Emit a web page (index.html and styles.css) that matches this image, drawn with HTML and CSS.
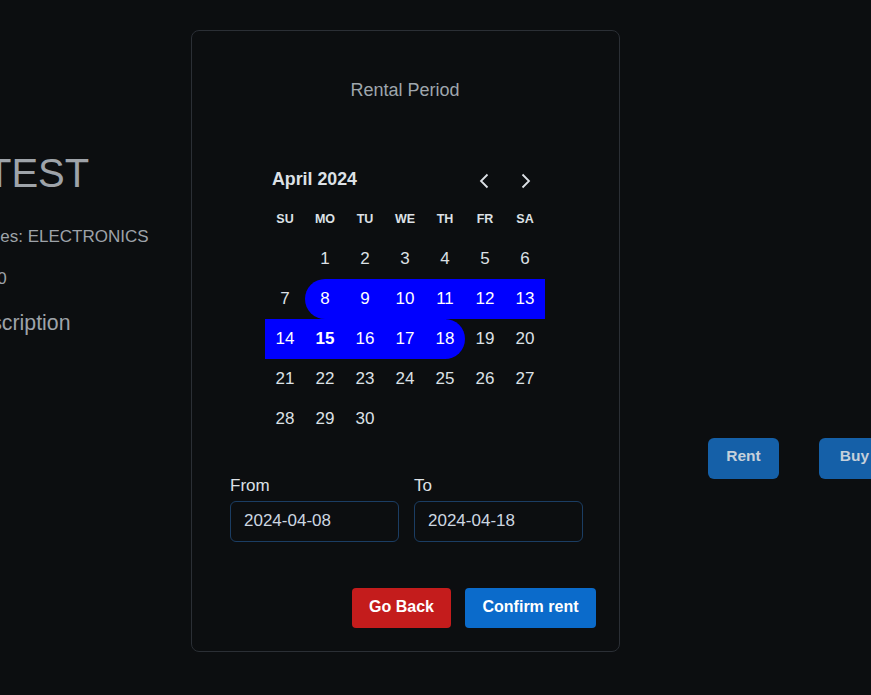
FILE: index.html
```html
<!DOCTYPE html>
<html>
<head>
<meta charset="utf-8">
<link rel="stylesheet" href="styles.css">
</head>
<body>
<div class="page">
  <div class="info">
    <h1 class="title">TEST</h1>
    <p class="cat">Categories: ELECTRONICS</p>
    <p class="price">Price: 0</p>
    <p class="desc">Description</p>
  </div>
  <div class="actions">
    <button class="bg-btn">Rent</button>
    <button class="bg-btn">Buy</button>
  </div>
</div>

<div class="modal">
  <div class="modal-title">Rental Period</div>
  <div class="calendar">
    <div class="cal-head">
      <span class="month">April 2024</span>
      <div class="arrows">
        <span class="arrow"><svg width="14" height="16" viewBox="0 0 14 16"><path d="M10.5 1.5 L4 8 L10.5 14.5" fill="none" stroke="#dde1e6" stroke-width="1.8"/></svg></span>
        <span class="arrow"><svg width="14" height="16" viewBox="0 0 14 16"><path d="M3.5 1.5 L10 8 L3.5 14.5" fill="none" stroke="#dde1e6" stroke-width="1.8"/></svg></span>
      </div>
    </div>
    <div class="grid">
      <div class="wd">SU</div><div class="wd">MO</div><div class="wd">TU</div><div class="wd">WE</div><div class="wd">TH</div><div class="wd">FR</div><div class="wd">SA</div>
      <div class="d"></div><div class="d">1</div><div class="d">2</div><div class="d">3</div><div class="d">4</div><div class="d">5</div><div class="d">6</div>
      <div class="d">7</div><div class="d sel start">8</div><div class="d sel">9</div><div class="d sel">10</div><div class="d sel">11</div><div class="d sel">12</div><div class="d sel">13</div>
      <div class="d sel">14</div><div class="d sel today">15</div><div class="d sel">16</div><div class="d sel">17</div><div class="d sel end">18</div><div class="d">19</div><div class="d">20</div>
      <div class="d">21</div><div class="d">22</div><div class="d">23</div><div class="d">24</div><div class="d">25</div><div class="d">26</div><div class="d">27</div>
      <div class="d">28</div><div class="d">29</div><div class="d">30</div><div class="d"></div><div class="d"></div><div class="d"></div><div class="d"></div>
    </div>
  </div>
  <div class="fields">
    <div class="field">
      <label class="lbl">From</label>
      <div class="input">2024-04-08</div>
    </div>
    <div class="field">
      <label class="lbl">To</label>
      <div class="input">2024-04-18</div>
    </div>
  </div>
  <div class="buttons">
    <button class="btn back">Go Back</button>
    <button class="btn confirm">Confirm rent</button>
  </div>
</div>
</body>
</html>
```
FILE: styles.css
```css
* { box-sizing: border-box; }
html, body {
  margin: 0;
  padding: 0;
  background: #0c0e10;
  overflow: hidden;
  font-family: "Liberation Sans", Arial, sans-serif;
}
.page {
  width: 871px;
  height: 695px;
  display: flex;
  overflow: hidden;
}
.info {
  margin-left: -64px;
  padding-top: 148px;
  width: 500px;
  flex: none;
  color: #9ea3a9;
}
.title {
  margin: 0 0 0 51px;
  font-weight: 400;
  font-size: 40px;
  line-height: 50px;
}
.cat {
  margin: 29px 0 0 0;
  font-size: 17px;
  line-height: 20px;
}
.price {
  margin: 22px 0 0 13px;
  font-size: 17px;
  line-height: 20px;
}
.desc {
  margin: 21px 0 0 28px;
  font-size: 21.3px;
  line-height: 26px;
}
.actions {
  margin-left: 272px;
  padding-top: 438px;
  display: flex;
  gap: 40px;
  flex: none;
}
.bg-btn {
  height: 41px;
  width: 71px;
  border: none;
  border-radius: 6px;
  background: #1560a8;
  color: #c5d0db;
  font-family: "Liberation Sans", Arial, sans-serif;
  font-weight: 700;
  font-size: 15.5px;
  padding: 0 0 5px;
}

.modal {
  position: fixed;
  left: 191px;
  top: 30px;
  width: 429px;
  height: 622px;
  border: 1px solid #2b2f35;
  border-radius: 8px;
  background: #0c0e10;
  padding: 49px 23px 0 38px;
  display: flex;
  flex-direction: column;
}
.modal-title {
  text-align: center;
  font-size: 18px;
  line-height: 20px;
  color: #9fa6ad;
  margin-left: -16px;
}
.calendar {
  margin: 60px 0 0 35px;
  width: 280px;
}
.cal-head {
  height: 39px;
  display: flex;
  align-items: center;
  justify-content: space-between;
  padding-left: 7px;
}
.month {
  font-weight: 700;
  font-size: 17.8px;
  color: #dde1e6;
}
.arrows {
  display: flex;
  gap: 28px;
  margin-right: 12px;
  padding-top: 2px;
}
.arrow {
  width: 14px;
  height: 16px;
  display: flex;
}
.grid {
  display: grid;
  grid-template-columns: repeat(7, 40px);
  grid-auto-rows: 40px;
}
.wd {
  display: flex;
  align-items: center;
  justify-content: center;
  font-size: 12.5px;
  font-weight: 700;
  color: #dde1e6;
}
.d {
  display: flex;
  align-items: center;
  justify-content: center;
  font-size: 17px;
  color: #dde1e6;
}
.sel {
  background: #0000ff;
  color: #ffffff;
}
.start { border-radius: 20px 0 0 20px; }
.end { border-radius: 0 20px 20px 0; }
.today { font-weight: 700; }

.fields {
  margin-top: 37px;
  margin-left: 0;
  display: flex;
  gap: 15px;
}
.field {
  display: flex;
  flex-direction: column;
  gap: 5px;
}
.lbl {
  font-size: 17px;
  line-height: 20px;
  color: #dde1e6;
}
.input {
  width: 169px;
  height: 41px;
  border: 1px solid #1b3d63;
  border-radius: 6px;
  padding: 0 13px;
  display: flex;
  align-items: center;
  font-size: 17px;
  color: #cdd7e1;
  padding-bottom: 2px;
}
.buttons {
  margin-top: 46px;
  display: flex;
  justify-content: flex-end;
  gap: 14px;
}
.btn {
  height: 40px;
  border: none;
  border-radius: 4px;
  color: #ffffff;
  font-family: "Liberation Sans", Arial, sans-serif;
  font-weight: 700;
  font-size: 16px;
  padding: 0 0 2px;
}
.back { width: 99px; background: #c41c1c; }
.confirm { width: 131px; background: #0b6bcb; }
```
